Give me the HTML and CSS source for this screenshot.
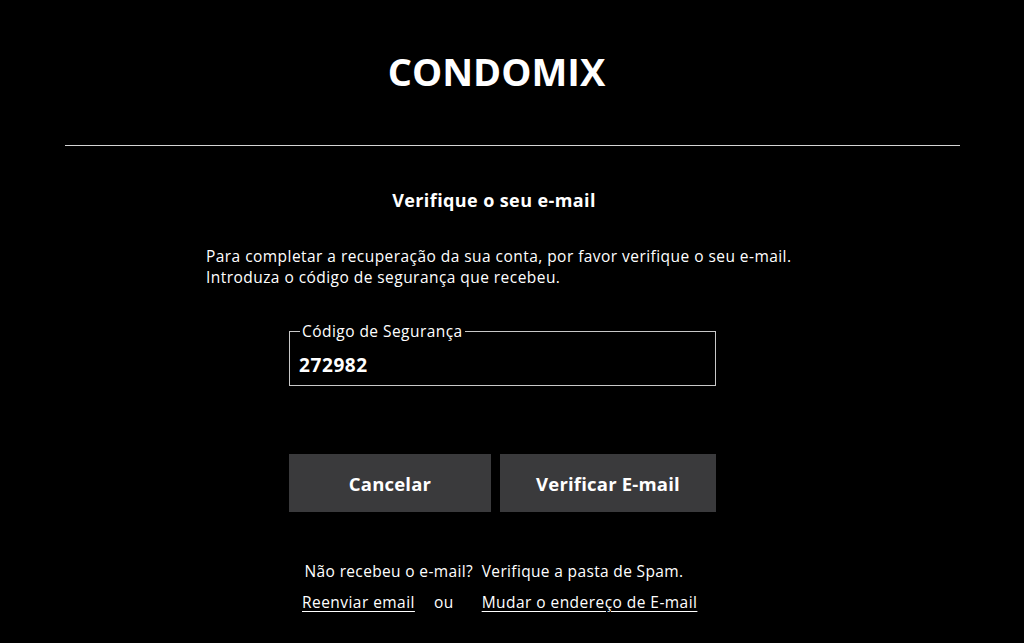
FILE: index.html
```html
<!DOCTYPE html>
<html lang="pt">
<head>
<meta charset="utf-8">
<title>Condomix</title>
<link rel="stylesheet" href="styles.css">
</head>
<body>
<div class="page">
  <header class="header">
    <h1 class="brand">CONDOMIX</h1>
  </header>
  <main class="content">
    <h2 class="title">Verifique o seu e-mail</h2>
    <p class="intro">Para completar a recuperação da sua conta, por favor verifique o seu e-mail.<br>Introduza o código de segurança que recebeu.</p>
    <fieldset class="code-field">
      <legend class="code-legend">Código de Segurança</legend>
      <input class="code-input" type="text" value="272982">
    </fieldset>
    <div class="actions">
      <button class="btn btn-cancel">Cancelar</button>
      <button class="btn btn-verify">Verificar E-mail</button>
    </div>
    <p class="hint">Não recebeu o e-mail?&nbsp; Verifique a pasta de Spam.</p>
    <div class="links">
      <a class="link" href="#">Reenviar email</a>
      <span class="or">ou</span>
      <a class="link" href="#">Mudar o endereço de E-mail</a>
    </div>
  </main>
</div>
</body>
</html>
```
FILE: styles.css
```css
* { box-sizing: border-box; }
html, body {
  margin: 0;
  background: #000;
  color: #fff;
  font-family: "Open Sans", "Noto Sans", sans-serif;
}
.page {
  width: 895px;
  margin-left: 65px;
}
.header {
  border-bottom: 1px solid #d4d4d4;
  height: 146px;
  padding-top: 45px;
  padding-right: 32px;
  text-align: center;
}
.brand {
  margin: 0;
  font-size: 38px;
  font-weight: 700;
  line-height: 52px;
  letter-spacing: 0;
}
.content {
  padding-left: 141px;
  width: 729px;
}
.title {
  margin: 42px 0 0;
  padding-right: 12px;
  text-align: center;
  font-size: 18px;
  font-weight: 700;
  line-height: 24px;
  letter-spacing: 0.4px;
}
.intro {
  margin: 34px 0 0;
  font-size: 15.5px;
  line-height: 21px;
  letter-spacing: 0.45px;
}
.code-field {
  margin: 35px 0 0 83px;
  width: 427px;
  height: 63px;
  border: 1px solid #c8c8c8;
  padding: 0 9px;
}
.code-legend {
  padding: 0 2px;
  margin-left: 1px;
  font-size: 15.5px;
  line-height: 16px;
  letter-spacing: 0.45px;
}
.code-input {
  display: block;
  width: 100%;
  margin-top: 14px;
  padding: 0;
  background: transparent;
  border: 0;
  color: #fff;
  font-family: inherit;
  font-size: 19px;
  font-weight: 700;
  line-height: 24px;
  letter-spacing: 0.6px;
  outline: none;
}
.actions {
  display: flex;
  gap: 9px;
  margin: 68px 0 0 83px;
}
.btn {
  height: 58px;
  border: 0;
  background: #3a3a3c;
  color: #fff;
  font-family: inherit;
  font-size: 18.5px;
  font-weight: 700;
  letter-spacing: 0.2px;
  cursor: pointer;
}
.btn-cancel { width: 202px; }
.btn-verify { width: 216px; }
.hint {
  margin: 49px 0 0;
  padding-right: 12px;
  text-align: center;
  font-size: 15.5px;
  line-height: 20px;
  letter-spacing: 0.35px;
}
.links {
  display: flex;
  gap: 19px;
  margin: 11px 0 0 96px;
  font-size: 15.5px;
  line-height: 20px;
  letter-spacing: 0.45px;
}
.link {
  color: #fff;
  text-decoration: underline;
  text-underline-offset: 3px;
}
.or { margin-right: 9px; }
```
